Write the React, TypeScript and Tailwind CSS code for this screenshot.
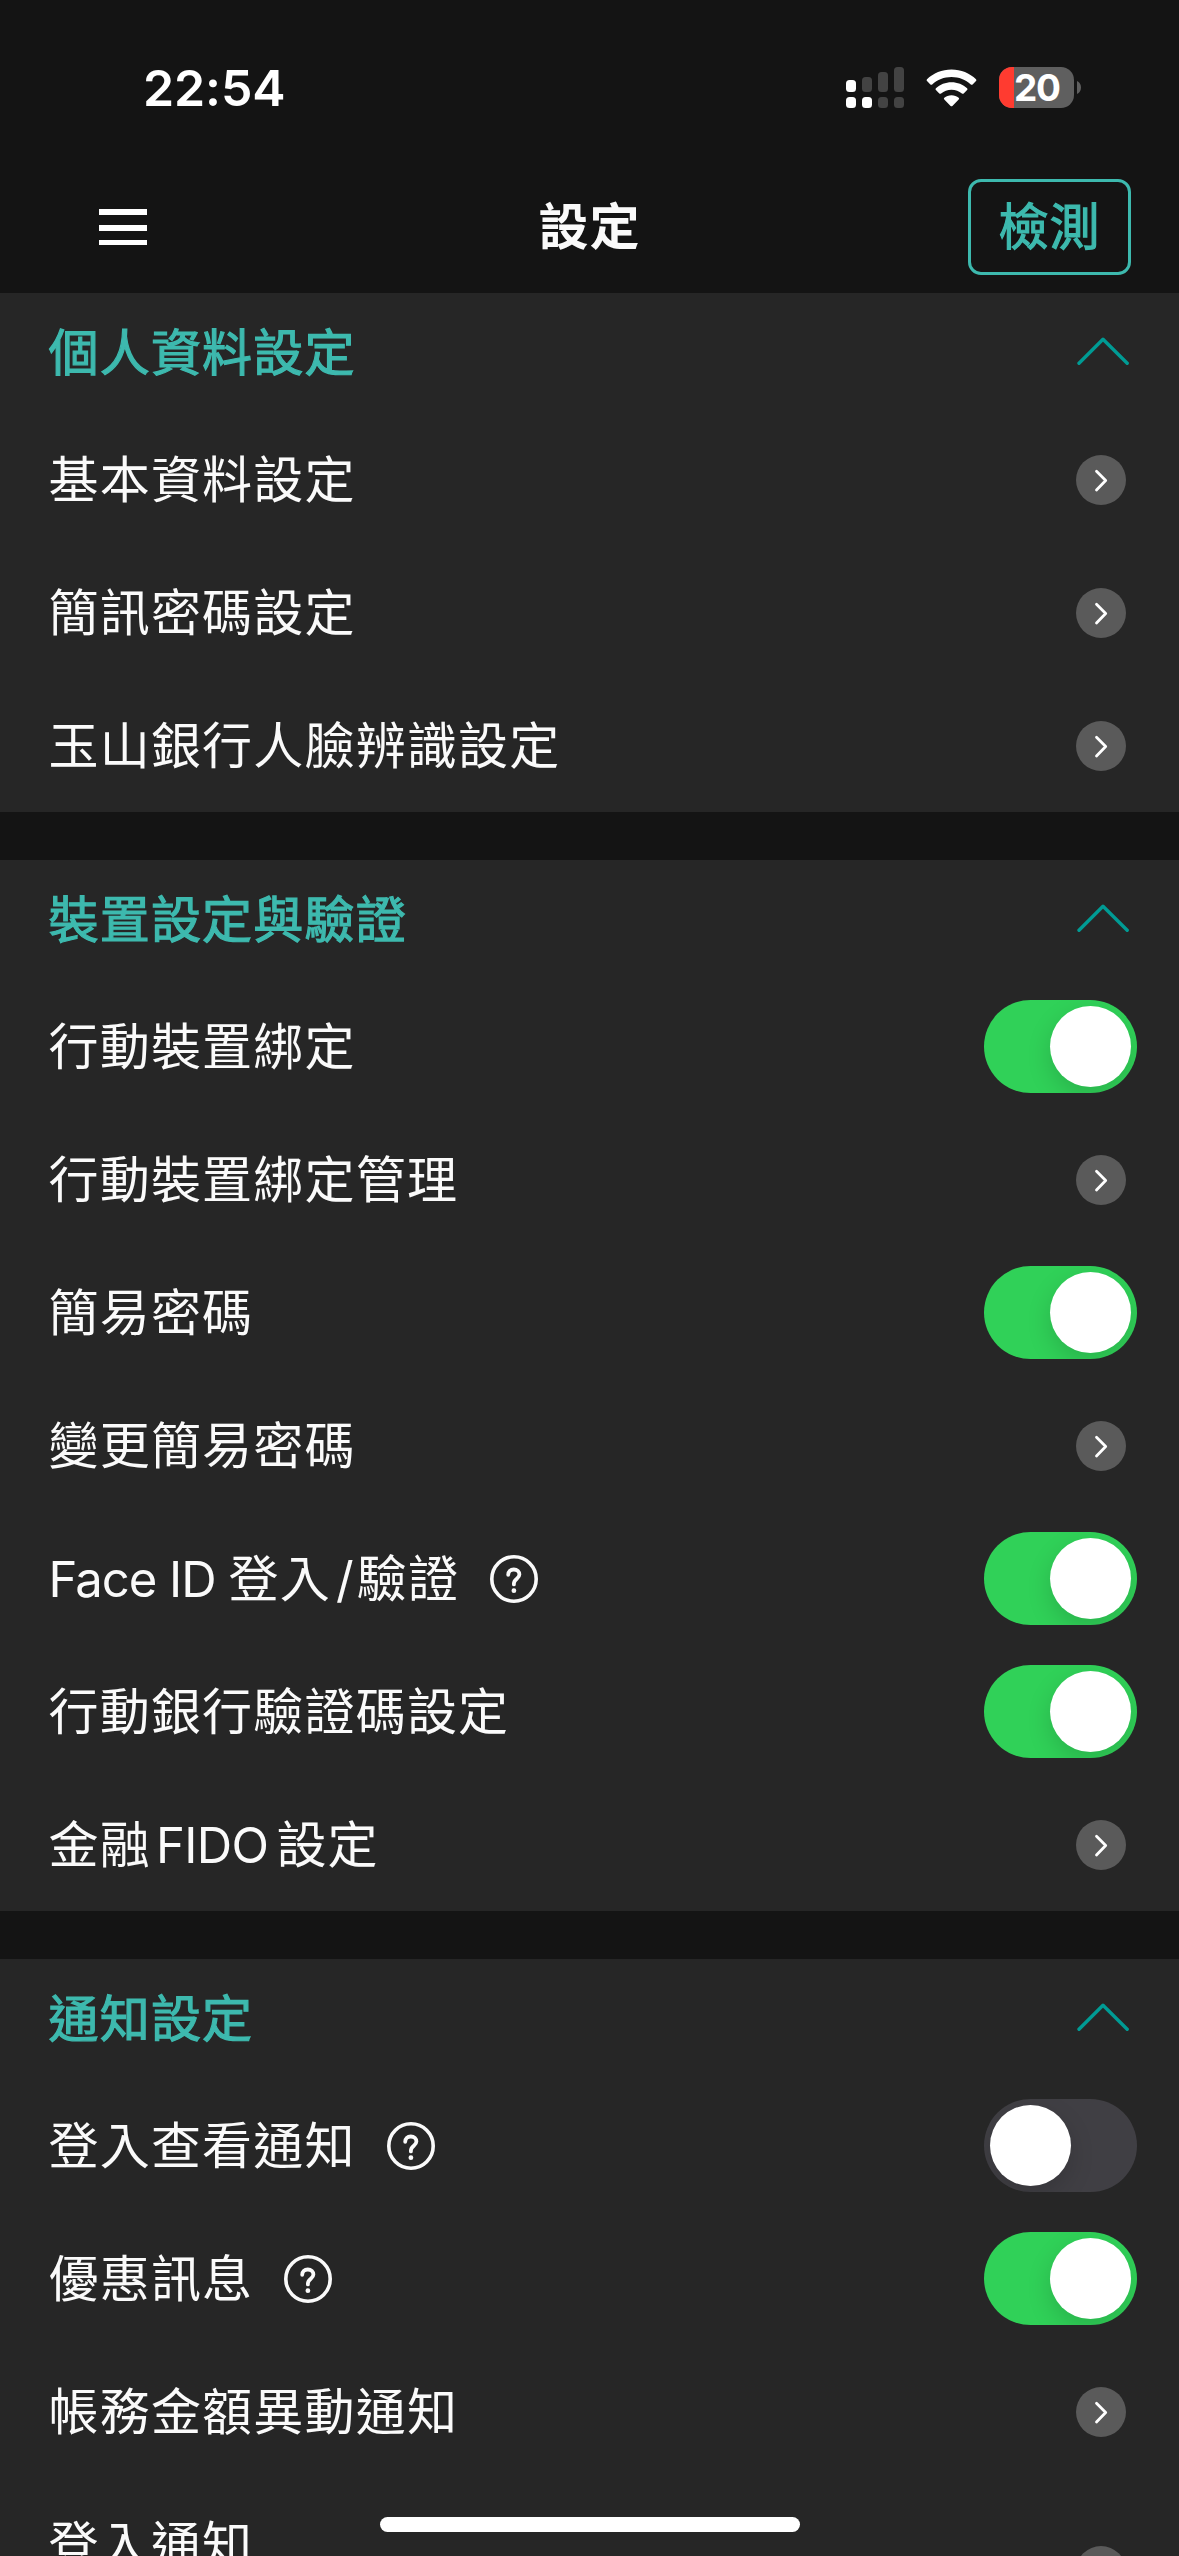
import React from "react";

type Part = { text: string; className: string };
type Item = {
  label: string | Part[];
  help?: string;
  control: "link" | "on" | "off";
  tall?: boolean;
};
type Group = { title: string; items: Item[] };

const CJK = "tracking-[1.2px]";

const groups: Group[] = [
  {
    title: "個人資料設定",
    items: [
      { label: "基本資料設定", control: "link" },
      { label: "簡訊密碼設定", control: "link" },
      { label: "玉山銀行人臉辨識設定", control: "link" },
    ],
  },
  {
    title: "裝置設定與驗證",
    items: [
      { label: "行動裝置綁定", control: "on" },
      { label: "行動裝置綁定管理", control: "link" },
      { label: "簡易密碼", control: "on" },
      { label: "變更簡易密碼", control: "link" },
      {
        label: [
          { text: "Face ID", className: "font-[Inter] text-[49px] leading-none tracking-[-1px]" },
          { text: "登入", className: `ml-[13px] ${CJK}` },
          { text: "/", className: "ml-[5px] font-[Inter] text-[49px] leading-none" },
          { text: "驗證", className: `ml-[3px] ${CJK}` },
        ],
        help: "說明",
        control: "on",
      },
      { label: "行動銀行驗證碼設定", control: "on" },
      {
        label: [
          { text: "金融", className: CJK },
          { text: "FIDO", className: "ml-[5px] font-[Inter] text-[49px] leading-none tracking-[-0.6px]" },
          { text: "設定", className: `ml-[8px] ${CJK}` },
        ],
        control: "link",
      },
    ],
  },
  {
    title: "通知設定",
    items: [
      { label: "登入查看通知", help: "說明", control: "off" },
      { label: "優惠訊息", help: "說明", control: "on" },
      { label: "帳務金額異動通知", control: "link" },
      { label: "登入通知", control: "link", tall: true },
    ],
  },
];

function Signal() {
  return (
    <svg className="h-[41px] w-[58px]" viewBox="0 0 58 41">
      <rect x="0" y="13" width="10" height="12" rx="3.5" fill="#fff" />
      <rect x="16" y="10" width="10" height="15" rx="3.5" fill="#434343" />
      <rect x="32" y="5" width="10" height="20" rx="3.5" fill="#434343" />
      <rect x="48" y="0" width="10" height="25" rx="3.5" fill="#434343" />
      <rect x="0" y="30" width="10" height="11" rx="3.5" fill="#fff" />
      <rect x="16" y="30" width="10" height="11" rx="3.5" fill="#fff" />
      <rect x="32" y="30" width="10" height="11" rx="3.5" fill="#434343" />
      <rect x="48" y="30" width="10" height="11" rx="3.5" fill="#434343" />
    </svg>
  );
}

function Wifi() {
  return (
    <svg className="ml-[22px] h-[38px] w-[51px]" viewBox="0 0 51 38" fill="#fff">
      <path d="M25.5 0.5C35 .5 43.700 4.200 50 10.200Q50.900 11.100 50 12L46.600 15.400Q45.700 16.200 44.800 15.400C39.700 10.700 32.900 8 25.500 8S11.300 10.700 6.200 15.400Q5.300 16.200 4.400 15.400L1 12Q.1 11.100 1 10.200C7.300 4.200 16 .5 25.500 .5Z" />
      <path d="M25.500 13.300C31.500 13.300 37 15.600 41.100 19.300Q42 20.200 41.100 21.100L37.700 24.500Q36.800 25.200 35.900 24.500C33.100 22.200 29.500 20.800 25.500 20.800S17.900 22.200 15.100 24.500Q14.200 25.200 13.300 24.500L9.900 21.100Q9 20.200 9.900 19.300C14 15.600 19.500 13.300 25.500 13.300Z" />
      <path d="M25.500 26.200C28.300 26.200 30.800 27.100 32.700 28.700Q33.600 29.500 32.700 30.400L26.400 36.900Q25.500 37.800 24.600 36.900L18.300 30.400Q17.400 29.500 18.300 28.700C20.200 27.100 22.700 26.200 25.500 26.200Z" />
    </svg>
  );
}

function Battery() {
  return (
    <div className="ml-[22px] flex items-center">
      <div className="flex h-[41px] w-[75px] items-center overflow-hidden rounded-[13px] bg-[#5f5f5f]">
        <div className="h-full w-[15px] bg-[#ff3b30]" />
        <span className="font-[Inter] text-[37px] leading-[41px] font-bold tracking-[-1.4px] text-white">20</span>
      </div>
      <svg className="ml-[3px] h-[13px] w-[4px]" viewBox="0 0 4 13">
        <path d="M0 0C2.400 1 4 3.500 4 6.500S2.400 12 0 13Z" fill="#5f5f5f" />
      </svg>
    </div>
  );
}

function Toggle({ on }: { on: boolean }) {
  return (
    <button
      role="switch"
      aria-checked={on}
      className={`mr-[42px] flex h-[93px] w-[153px] items-center overflow-hidden rounded-full p-[6px] ${
        on ? "justify-end bg-[#30d158]" : "justify-start bg-[#403f44]"
      }`}
    >
      <span className="size-[81px] rounded-full bg-white shadow-[0_9px_24px_rgba(0,0,0,0.15)]" />
    </button>
  );
}

function LinkArrow() {
  return (
    <svg className="mr-[53px] size-[50px]" viewBox="0 0 50 50">
      <circle cx="25" cy="25" r="25" fill="#5a5a5a" />
      <path d="M20.500 16.200L29.700 25.600L20.500 35" fill="none" stroke="#fff" strokeWidth="2.800" strokeLinecap="round" strokeLinejoin="round" />
    </svg>
  );
}

function HelpIcon({ label }: { label: string }) {
  return (
    <svg aria-label={label} className="ml-[31px] size-[48px]" viewBox="0 0 48 48" fill="none" stroke="#fafafa">
      <circle cx="24" cy="24" r="22.200" strokeWidth="3.600" />
      <path d="M18.200 19.800C18.200 16.400 20.500 14.500 23.800 14.500S29.400 16.600 29.400 19.600C29.400 23.800 23.900 23.600 23.900 28.600V29.400" strokeWidth="3.800" strokeLinecap="round" />
      <circle cx="23.900" cy="35.700" r="2.400" fill="#fafafa" stroke="none" />
    </svg>
  );
}

function Row({ item }: { item: Item }) {
  return (
    <div className={`flex shrink-0 items-center pl-[48.500px] ${item.tall ? "h-[185px]" : "h-[133px]"}`}>
      <div
        className={`flex items-baseline text-[50px] leading-[72px] whitespace-nowrap text-[#fafafa] ${
          item.tall ? "self-start pt-[27px]" : "pb-[7px]"
        }`}
      >
        {typeof item.label === "string" ? (
          <span className={CJK}>{item.label}</span>
        ) : (
          item.label.map((p) => (
            <span key={p.text} className={p.className}>
              {p.text}
            </span>
          ))
        )}
      </div>
      {item.help && <HelpIcon label={item.help} />}
      <div className="ml-auto flex">
        {item.control === "link" ? <LinkArrow /> : <Toggle on={item.control === "on"} />}
      </div>
    </div>
  );
}

export default function App() {
  return (
    <div className="relative flex h-[2556px] w-[1179px] flex-col overflow-hidden bg-[#141414] font-['Noto_Sans_CJK_TC',sans-serif]">
      <div className="flex h-[175px] shrink-0 items-center justify-between pr-[98px] pl-[143px]">
        <span className="font-[Inter] text-[50px] leading-none font-semibold tracking-[-0.1px] text-white">22:54</span>
        <div className="flex items-center">
          <Signal />
          <Wifi />
          <Battery />
        </div>
      </div>

      <header className="grid h-[118px] shrink-0 grid-cols-3 items-center px-[48px] pb-[14px]">
        <div className="ml-[51px] flex h-[36px] w-[48px] flex-col justify-between">
          <i className="h-[6px] bg-white" />
          <i className="h-[6px] bg-white" />
          <i className="h-[5px] bg-white" />
        </div>
        <h1 className="pb-[8px] text-center text-[50px] leading-[72px] font-bold tracking-[1.1px] text-[#fafafa]">設定</h1>
        <button className="flex h-[96px] w-[163px] items-center justify-center justify-self-end rounded-[13px] border-[3px] border-[#3db9ae] pb-[8px] text-[50px] leading-[72px] font-normal tracking-[1.1px] text-[#3db9ae] [-webkit-text-stroke:1.2px_#3db9ae]">
          檢測
        </button>
      </header>

      <main className="flex flex-col gap-[48px]">
        {groups.map((g) => (
          <section key={g.title} className="flex shrink-0 flex-col bg-[#262626]">
            <div className="flex h-[120px] shrink-0 items-center justify-between pr-[50px] pl-[48.500px]">
              <h2 className="pb-[8px] text-[50px] leading-[72px] font-normal tracking-[1.2px] text-[#3db9ae] [-webkit-text-stroke:1.2px_#3db9ae]">
                {g.title}
              </h2>
              <svg className="mb-[4px] h-[28px] w-[52px]" viewBox="0 0 52 28">
                <path d="M2 26.200L26 2.200L50.200 26.200" fill="none" stroke="#009b94" strokeWidth="3.400" strokeLinecap="round" strokeLinejoin="round" />
              </svg>
            </div>
            {g.items.map((it, i) => (
              <Row key={i} item={it} />
            ))}
          </section>
        ))}
      </main>

      <div className="absolute top-[2517px] left-[380px] h-[15px] w-[420px] rounded-full bg-white" />
    </div>
  );
}
